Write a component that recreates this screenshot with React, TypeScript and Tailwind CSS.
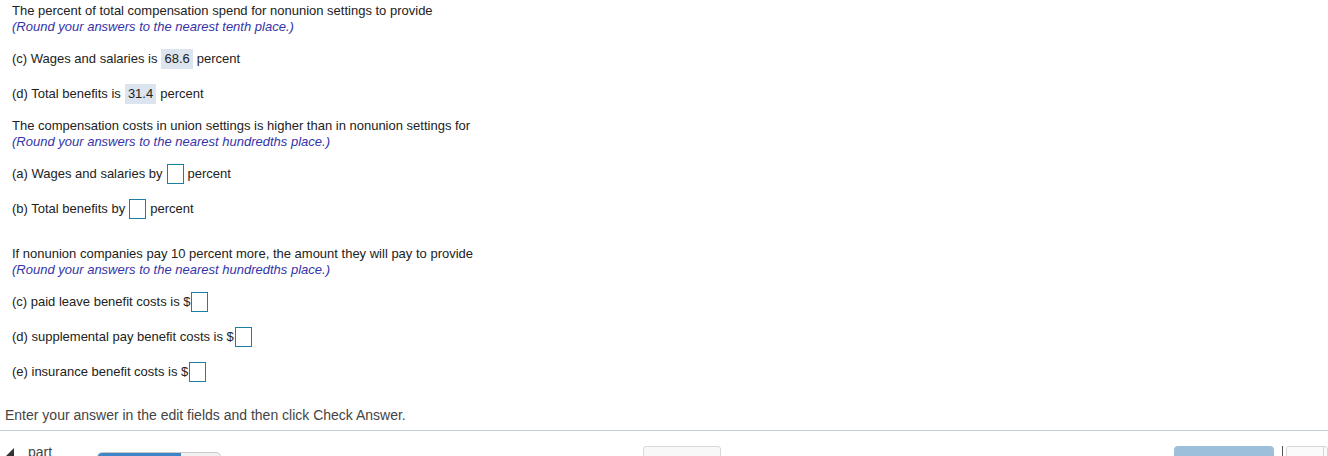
import React from "react";

const font = { fontFamily: '"Liberation Sans", Arial, sans-serif' };

function Shown({ value }: { value: string }) {
  return <span className="mx-[4px] inline-flex h-5 items-center bg-[#dce4f0] px-[3px]">{value}</span>;
}

function Blank({ tight = false }: { tight?: boolean }) {
  return (
    <span
      className={`inline-block h-[20px] w-[17px] border border-[#1c7ea3] bg-white ${tight ? "ml-[1px] mr-0" : "mx-[4px]"}`}
    />
  );
}

function Heading({ lead, hint }: { lead: string; hint: string }) {
  return (
    <div className="leading-4">
      <div className="text-[#222]">{lead}</div>
      <div className="italic text-[#3434a8]">{hint}</div>
    </div>
  );
}

function Row({ children, className = "" }: { children: React.ReactNode; className?: string }) {
  return <div className={`flex h-5 items-center text-[#222] ${className}`}>{children}</div>;
}

export default function App() {
  return (
    <div className="h-[456px] w-[1328px] overflow-hidden bg-white text-[13px]" style={font}>
      <div className="pl-3 pt-[3px]">
        <Heading
          lead="The percent of total compensation spend for nonunion settings to provide"
          hint="(Round your answers to the nearest tenth place.)"
        />
        <Row className="mt-[14px]">
          (c) Wages and salaries is <Shown value="68.6" /> percent
        </Row>
        <Row className="mt-[15px]">
          (d) Total benefits is <Shown value="31.4" /> percent
        </Row>

        <div className="mt-[14px]">
          <Heading
            lead="The compensation costs in union settings is higher than in nonunion settings for"
            hint="(Round your answers to the nearest hundredths place.)"
          />
        </div>
        <Row className="mt-[14px]">
          (a) Wages and salaries by <Blank /> percent
        </Row>
        <Row className="mt-[15px]">
          (b) Total benefits by <Blank /> percent
        </Row>

        <div className="mt-[27px]">
          <Heading
            lead="If nonunion companies pay 10 percent more, the amount they will pay to provide"
            hint="(Round your answers to the nearest hundredths place.)"
          />
        </div>
        <Row className="mt-[14px]">
          (c) paid leave benefit costs is $<Blank tight />
        </Row>
        <Row className="mt-[15px]">
          (d) supplemental pay benefit costs is $<Blank tight />
        </Row>
        <Row className="mt-[15px]">
          (e) insurance benefit costs is $<Blank tight />
        </Row>
      </div>

      <div className="mt-[25px] border-b border-[#c8cfdc] pb-[7px] pl-[5px] text-[14px] leading-4 text-[#444]">
        Enter your answer in the edit fields and then click Check Answer.
      </div>

      <div className="relative flex h-[26px] items-start">
        <div className="mt-[17px] ml-[5px] h-0 w-0 border-y-[9px] border-r-[9px] border-y-transparent border-r-[#333]" />
        <div className="mt-[13px] ml-[14px] text-[14px] leading-4 text-[#444]">part</div>
        <div className="mt-[21px] ml-[45px] flex h-[10px] w-[124px] overflow-hidden rounded-[5px] border border-[#c9c9c9] bg-[#f1f1f1]">
          <div className="h-full w-[83px] bg-[#3e85c8]" />
        </div>
        <div className="mt-[15px] ml-[422px] h-[20px] w-[78px] rounded-[3px] border border-[#d9d9d9] bg-[#f8f8f8]" />
        <div className="mt-[15px] ml-[453px] h-[20px] w-[100px] rounded-t-[4px] bg-[#9cbfdc]" />
        <div className="mt-[15px] ml-[8px] h-[20px] w-px bg-[#555]" />
        <div className="mt-[15px] ml-[3px] flex h-[20px] w-[42px] rounded-[3px] border border-[#d6d6d6] bg-[#fafafa]">
          <div className="ml-auto mr-[3px] h-full w-px bg-[#d6d6d6]" />
        </div>
      </div>
    </div>
  );
}
